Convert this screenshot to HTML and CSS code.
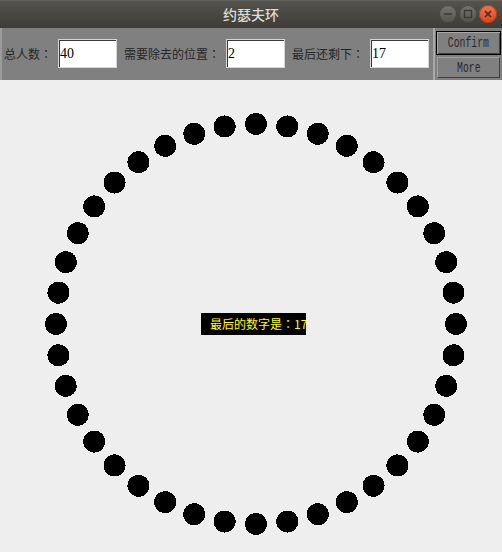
FILE: index.html
```html
<!DOCTYPE html>
<html lang="zh-CN">
<head>
<meta charset="utf-8">
<title>约瑟夫环</title>
<link rel="stylesheet" href="styles.css">
</head>
<body>
<div class="window">
  <header class="titlebar">
    <span class="title">约瑟夫环</span>
    <div class="controls">
      <span class="wbtn min"><svg width="18" height="18" viewBox="0 0 18 18"><line x1="5" y1="9" x2="13" y2="9" stroke="#3a3935" stroke-width="1.6"/></svg></span>
      <span class="wbtn max"><svg width="18" height="18" viewBox="0 0 18 18"><rect x="5.5" y="5.5" width="7" height="7" fill="none" stroke="#3a3935" stroke-width="1.4"/></svg></span>
      <span class="wbtn close"><svg width="18" height="18" viewBox="0 0 18 18"><path d="M6 6L12 12M12 6L6 12" stroke="#3a2a22" stroke-width="1.5"/></svg></span>
    </div>
  </header>
  <div class="toolbar">
    <div class="fields">
      <label class="lbl">总人数<span class="colon" lang="zh-TW">：</span></label>
      <input class="field" value="40">
      <label class="lbl">需要除去的位置<span class="colon" lang="zh-TW">：</span></label>
      <input class="field" value="2">
      <label class="lbl">最后还剩下<span class="colon" lang="zh-TW">：</span></label>
      <input class="field" value="17">
    </div>
    <div class="buttons">
      <button class="btn default"><span class="btn-text">Confirm</span></button>
      <button class="btn"><span class="btn-text">More</span></button>
    </div>
  </div>
  <div class="canvas">
    <svg class="ring" width="502" height="471" viewBox="0 0 502 471">
      <g transform="translate(256 244)" fill="#000" shape-rendering="crispEdges">
        <circle cx="0" cy="-200" r="11" transform="rotate(0)"/>
        <circle cx="0" cy="-200" r="11" transform="rotate(9)"/>
        <circle cx="0" cy="-200" r="11" transform="rotate(18)"/>
        <circle cx="0" cy="-200" r="11" transform="rotate(27)"/>
        <circle cx="0" cy="-200" r="11" transform="rotate(36)"/>
        <circle cx="0" cy="-200" r="11" transform="rotate(45)"/>
        <circle cx="0" cy="-200" r="11" transform="rotate(54)"/>
        <circle cx="0" cy="-200" r="11" transform="rotate(63)"/>
        <circle cx="0" cy="-200" r="11" transform="rotate(72)"/>
        <circle cx="0" cy="-200" r="11" transform="rotate(81)"/>
        <circle cx="0" cy="-200" r="11" transform="rotate(90)"/>
        <circle cx="0" cy="-200" r="11" transform="rotate(99)"/>
        <circle cx="0" cy="-200" r="11" transform="rotate(108)"/>
        <circle cx="0" cy="-200" r="11" transform="rotate(117)"/>
        <circle cx="0" cy="-200" r="11" transform="rotate(126)"/>
        <circle cx="0" cy="-200" r="11" transform="rotate(135)"/>
        <circle cx="0" cy="-200" r="11" transform="rotate(144)"/>
        <circle cx="0" cy="-200" r="11" transform="rotate(153)"/>
        <circle cx="0" cy="-200" r="11" transform="rotate(162)"/>
        <circle cx="0" cy="-200" r="11" transform="rotate(171)"/>
        <circle cx="0" cy="-200" r="11" transform="rotate(180)"/>
        <circle cx="0" cy="-200" r="11" transform="rotate(189)"/>
        <circle cx="0" cy="-200" r="11" transform="rotate(198)"/>
        <circle cx="0" cy="-200" r="11" transform="rotate(207)"/>
        <circle cx="0" cy="-200" r="11" transform="rotate(216)"/>
        <circle cx="0" cy="-200" r="11" transform="rotate(225)"/>
        <circle cx="0" cy="-200" r="11" transform="rotate(234)"/>
        <circle cx="0" cy="-200" r="11" transform="rotate(243)"/>
        <circle cx="0" cy="-200" r="11" transform="rotate(252)"/>
        <circle cx="0" cy="-200" r="11" transform="rotate(261)"/>
        <circle cx="0" cy="-200" r="11" transform="rotate(270)"/>
        <circle cx="0" cy="-200" r="11" transform="rotate(279)"/>
        <circle cx="0" cy="-200" r="11" transform="rotate(288)"/>
        <circle cx="0" cy="-200" r="11" transform="rotate(297)"/>
        <circle cx="0" cy="-200" r="11" transform="rotate(306)"/>
        <circle cx="0" cy="-200" r="11" transform="rotate(315)"/>
        <circle cx="0" cy="-200" r="11" transform="rotate(324)"/>
        <circle cx="0" cy="-200" r="11" transform="rotate(333)"/>
        <circle cx="0" cy="-200" r="11" transform="rotate(342)"/>
        <circle cx="0" cy="-200" r="11" transform="rotate(351)"/>
      </g>
    </svg>
    <div class="result">最后的数字是<span class="colon" lang="zh-TW">：</span>17</div>
  </div>
</div>
</body>
</html>
```

FILE: styles.css
```css
html, body {
  margin: 0;
  padding: 0;
}
body {
  background: #eeeeee;
  width: 502px;
  height: 552px;
  overflow: hidden;
  font-family: "Noto Sans CJK SC", "DejaVu Sans", sans-serif;
}
.window {
  display: flex;
  flex-direction: column;
  width: 502px;
  height: 552px;
}
.titlebar {
  height: 28px;
  flex: none;
  display: grid;
  grid-template-columns: 1fr auto 1fr;
  align-items: center;
  background: linear-gradient(#55534e, #3d3c38);
  border-top: 1px solid #65635e;
  box-sizing: border-box;
}
.title {
  grid-column: 2;
  color: #dfdbd2;
  font-size: 14px;
  font-weight: 500;
  line-height: 28px;
  margin-top: -1px;
}
.controls {
  grid-column: 3;
  justify-self: end;
  display: flex;
  gap: 2px;
  padding-right: 5px;
  margin-top: -1px;
}
.wbtn {
  width: 18px;
  height: 18px;
  border-radius: 50%;
  display: flex;
  box-sizing: border-box;
}
.wbtn.min, .wbtn.max {
  background: linear-gradient(#77756f, #55534e);
  box-shadow: inset 0 0 0 1px #45443f;
}
.wbtn.close {
  background: linear-gradient(#f27650, #d9461c);
  box-shadow: inset 0 0 0 1px #b43c18;
}
.colon {
  font-family: "Noto Sans CJK TC", "Noto Sans CJK JP", sans-serif;
}
.toolbar {
  height: 52px;
  flex: none;
  display: flex;
  background: #9c9c9c;
}
.fields {
  flex: none;
  width: 431px;
  margin-left: 2px;
  display: flex;
  align-items: center;
  padding-bottom: 1px;
  box-sizing: border-box;
  background: #808080;
}
.lbl {
  font-size: 12px;
  color: #262626;
  margin-right: 6px;
  white-space: nowrap;
}
.lbl:first-child { margin-left: 2px; }
.field + .lbl { margin-left: 7px; }
.field {
  width: 59px;
  height: 29px;
  flex: none;
  box-sizing: border-box;
  margin: 0;
  padding: 0 0 0 1px;
  border: 1px solid #d6d6d6;
  box-shadow: inset 1px 1px 0 #3a3a3a;
  background: #fff;
  font-family: "Liberation Serif", "DejaVu Serif", serif;
  font-size: 14px;
  color: #000;
  outline: none;
}
.buttons {
  flex: 1;
  display: flex;
  flex-direction: column;
  gap: 2px;
  padding: 3px 1px 0 1px;
  border-left: 2px solid #a8a8a8;
  box-sizing: border-box;
  background: #808080;
}
.btn {
  height: 21px;
  margin: 0 1px;
  padding: 0;
  background: #808080;
  border: 1px solid #a0a0a0;
  border-right-color: #404040;
  border-bottom-color: #404040;
  font-family: "Liberation Mono", "DejaVu Sans Mono", monospace;
  font-size: 14px;
  color: #2a2a2a;
  display: flex;
  align-items: center;
  justify-content: center;
}
.btn-text {
  display: inline-block;
  transform: scaleX(0.7);
}
.btn.default {
  height: 24px;
  margin: 0;
  border: 1px solid #000;
  box-shadow: inset 1px 1px 0 #a8a8a8, inset -1px -1px 0 #404040;
}
.canvas {
  position: relative;
  flex: 1;
}
.ring {
  display: block;
}
.result {
  position: absolute;
  left: 201px;
  top: 233px;
  width: 105px;
  height: 22px;
  box-sizing: border-box;
  padding-left: 9px;
  background: #000;
  color: #ffff00;
  font-size: 12px;
  line-height: 22px;
  white-space: nowrap;
}
```
